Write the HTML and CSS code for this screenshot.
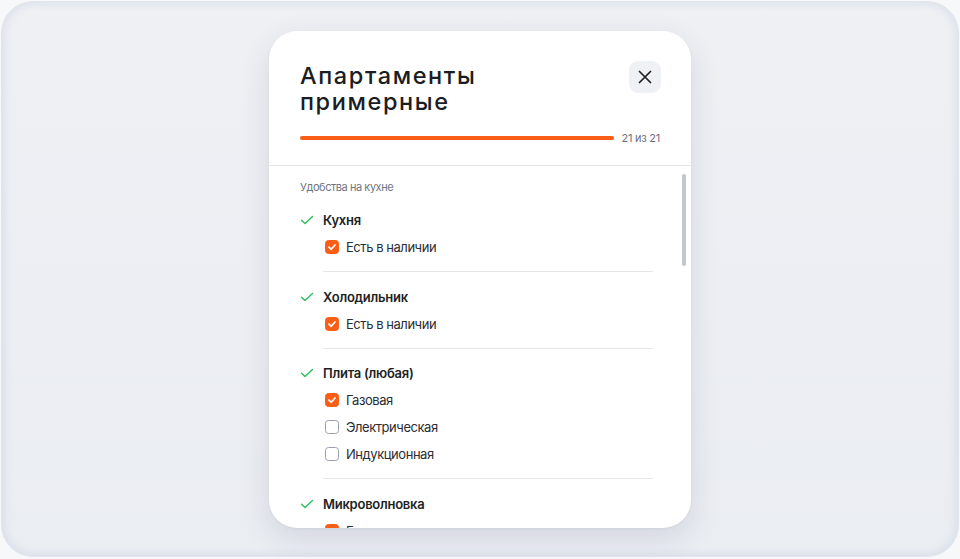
FILE: index.html
```html
<!DOCTYPE html>
<html lang="ru">
<head>
<meta charset="utf-8">
<title>Апартаменты примерные</title>
<link rel="stylesheet" href="styles.css">
</head>
<body>
<div class="frame">
  <div class="card">
    <div class="header">
      <div class="title-row">
        <h1 class="title">Апартаменты<br>примерные</h1>
        <button class="close" aria-label="Закрыть">
          <svg width="16" height="16" viewBox="0 0 16 16"><path d="M2.5 2.5L13.5 13.5M13.5 2.5L2.5 13.5" stroke="#1d1f24" stroke-width="1.7" stroke-linecap="round"/></svg>
        </button>
      </div>
      <div class="progress-row">
        <div class="progress"><div class="progress-fill" style="width:100%"></div></div>
        <span class="progress-text">21 из 21</span>
      </div>
    </div>
    <div class="body">
      <div class="section-label">Удобства на кухне</div>

      <div class="group">
        <div class="group-head">
          <svg class="ok" width="14" height="14" viewBox="0 0 14 14"><path d="M1.5 7.2L5 10.5L12.5 3.5" fill="none" stroke="#2bbf5a" stroke-width="1.4" stroke-linecap="round" stroke-linejoin="round"/></svg>
          <span>Кухня</span>
        </div>
        <div class="group-body">
          <label class="opt"><span class="box on"><svg width="10" height="10" viewBox="0 0 10 10"><path d="M2 5.2L4.2 7.3L8 3" fill="none" stroke="#fff" stroke-width="1.7" stroke-linecap="round" stroke-linejoin="round"/></svg></span>Есть в наличии</label>
        </div>
      </div>

      <div class="group">
        <div class="group-head">
          <svg class="ok" width="14" height="14" viewBox="0 0 14 14"><path d="M1.5 7.2L5 10.5L12.5 3.5" fill="none" stroke="#2bbf5a" stroke-width="1.4" stroke-linecap="round" stroke-linejoin="round"/></svg>
          <span>Холодильник</span>
        </div>
        <div class="group-body">
          <label class="opt"><span class="box on"><svg width="10" height="10" viewBox="0 0 10 10"><path d="M2 5.2L4.2 7.3L8 3" fill="none" stroke="#fff" stroke-width="1.7" stroke-linecap="round" stroke-linejoin="round"/></svg></span>Есть в наличии</label>
        </div>
      </div>

      <div class="group">
        <div class="group-head">
          <svg class="ok" width="14" height="14" viewBox="0 0 14 14"><path d="M1.5 7.2L5 10.5L12.5 3.5" fill="none" stroke="#2bbf5a" stroke-width="1.4" stroke-linecap="round" stroke-linejoin="round"/></svg>
          <span>Плита (любая)</span>
        </div>
        <div class="group-body">
          <label class="opt"><span class="box on"><svg width="10" height="10" viewBox="0 0 10 10"><path d="M2 5.2L4.2 7.3L8 3" fill="none" stroke="#fff" stroke-width="1.7" stroke-linecap="round" stroke-linejoin="round"/></svg></span>Газовая</label>
          <label class="opt"><span class="box"></span>Электрическая</label>
          <label class="opt"><span class="box"></span>Индукционная</label>
        </div>
      </div>

      <div class="group">
        <div class="group-head">
          <svg class="ok" width="14" height="14" viewBox="0 0 14 14"><path d="M1.5 7.2L5 10.5L12.5 3.5" fill="none" stroke="#2bbf5a" stroke-width="1.4" stroke-linecap="round" stroke-linejoin="round"/></svg>
          <span>Микроволновка</span>
        </div>
        <div class="group-body">
          <label class="opt"><span class="box on"><svg width="10" height="10" viewBox="0 0 10 10"><path d="M2 5.2L4.2 7.3L8 3" fill="none" stroke="#fff" stroke-width="1.7" stroke-linecap="round" stroke-linejoin="round"/></svg></span>Есть в наличии</label>
        </div>
      </div>
    </div>
    <div class="scrollbar"></div>
  </div>
</div>
</body>
</html>
```

FILE: styles.css
```css
* { box-sizing: border-box; }
html, body { margin: 0; padding: 0; }
body {
  background: #f7f8fa;
  font-family: Inter, "Noto Sans", sans-serif;
  color: #1d1f24;
  width: 960px;
  height: 559px;
  overflow: hidden;
}
.frame {
  margin: 1px;
  height: 556px;
  border-radius: 32px;
  background: linear-gradient(180deg, #eef0f4 0%, #eaedf2 100%);
  border: 1px solid #e1e5ec;
  box-shadow: inset 2px 0 10px rgba(160, 175, 210, 0.18), inset -2px 0 10px rgba(160, 175, 210, 0.18);
  display: flex;
  justify-content: center;
  padding-top: 29px;
}
.card {
  position: relative;
  width: 422px;
  height: 497px;
  background: #fff;
  border-radius: 28px;
  box-shadow: 0 10px 30px rgba(40, 50, 80, 0.12), 0 1px 3px rgba(40, 50, 80, 0.05);
  overflow: hidden;
  display: flex;
  flex-direction: column;
}
.header {
  padding: 30px 30px 20px 31px;
  border-bottom: 1px solid #e4e6ea;
}
.title-row {
  display: flex;
  justify-content: space-between;
  align-items: flex-start;
}
.title {
  margin: 2px 0 0;
  font-size: 23.5px;
  line-height: 26px;
  font-weight: 500;
  letter-spacing: 1.6px;
  color: #1b1d22;
}
.close {
  width: 32px;
  height: 32px;
  border: none;
  border-radius: 9px;
  background: #f0f1f5;
  padding: 0;
  display: flex;
  align-items: center;
  justify-content: center;
}
.progress-row {
  margin-top: 16px;
  display: flex;
  align-items: center;
  gap: 8px;
  height: 14px;
}
.progress {
  flex: 1;
  height: 4px;
  border-radius: 2px;
  background: #eceef2;
}
.progress-fill {
  height: 100%;
  border-radius: 2px;
  background: #fa5e16;
}
.progress-text {
  font-size: 11px;
  line-height: 14px;
  color: #6b717c;
  letter-spacing: -0.25px;
  white-space: nowrap;
  margin-right: 1px;
}
.body {
  padding: 14px 38px 0 31px;
}
.section-label {
  font-size: 11px;
  line-height: 14px;
  color: #70757f;
  letter-spacing: -0.45px;
  margin-bottom: 16px;
}
.group {
  padding-top: 14.5px;
}
.section-label + .group { padding-top: 0; }
.group-head {
  display: flex;
  align-items: center;
  gap: 9px;
  height: 20px;
  font-size: 13px;
  font-weight: 600;
  letter-spacing: -0.25px;
  color: #1d1f24;
}
.ok { flex: none; }
.group-body {
  margin-left: 23px;
  margin-top: 7px;
  padding: 0 0 14px 2px;
  border-bottom: 1px solid #e4e6ea;
  display: flex;
  flex-direction: column;
  gap: 7px;
}
.opt {
  display: flex;
  align-items: center;
  gap: 7px;
  height: 20px;
  font-size: 13px;
  letter-spacing: -0.45px;
  color: #2a2d33;
}
.box {
  flex: none;
  width: 14px;
  height: 14px;
  border-radius: 3.5px;
  border: 1.5px solid #9aa0ab;
  display: flex;
  align-items: center;
  justify-content: center;
}
.box.on {
  background: #fa5e16;
  border-color: #fa5e16;
}
.scrollbar {
  position: absolute;
  right: 5px;
  top: 143px;
  width: 4px;
  height: 92px;
  border-radius: 2px;
  background: #c3c7ce;
}
```
